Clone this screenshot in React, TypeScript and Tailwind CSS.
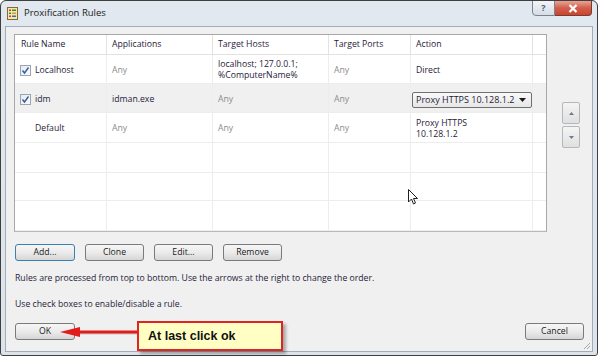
import React from "react";

const font = { fontFamily: '"Open Sans", "Noto Sans", sans-serif' };

function Check() {
  return (
    <div className="w-[11px] h-[11px] border border-[#9aa4b4] bg-gradient-to-br from-[#e4eaf2] to-[#fafbfd] flex items-center justify-center shrink-0">
      <svg width="9" height="9" viewBox="0 0 9 9">
        <path d="M1.5 4.5 L3.5 7 L7.5 1.5" stroke="#3a5a98" strokeWidth="1.4" fill="none" />
      </svg>
    </div>
  );
}

function Btn({ label, w, focus }: { label: string; w: string; focus?: boolean }) {
  return (
    <div
      className={`${w} h-[17px] rounded-[3px] border ${focus ? "border-[#3c7fb1]" : "border-[#7a7a7a]"} bg-gradient-to-b from-[#f6f6f6] via-[#ebebeb] to-[#d6d6d6] flex items-center justify-center text-[8.7px] text-[#1a1a1a]`}
    >
      {label}
    </div>
  );
}

const cols = ["w-[92px]", "w-[106px]", "w-[116px]", "w-[82px]", "w-[122px]", "w-[15px]"];

function Row({ h, bg, cells }: { h: string; bg?: string; cells: React.ReactNode[] }) {
  return (
    <div className={`flex ${h} ${bg ?? "bg-white"} border-b border-[#ededed]`}>
      {cols.map((c, i) => (
        <div key={i} className={`${c} shrink-0 border-r border-[#ededed] flex items-center px-[5px] pt-[3px] text-[8.7px] leading-[11.5px] overflow-visible`}>
          {cells[i]}
        </div>
      ))}
    </div>
  );
}

const gray = (t: string) => <span className="text-[#8c8c8c]">{t}</span>;
const dark = (t: React.ReactNode) => <span className="text-[#1f2238]">{t}</span>;

export default function App() {
  return (
    <div className="w-[600px] h-[357px] bg-white relative" style={font}>
      <div className="w-[598px] h-[356px] border border-[#3f3f3f] rounded-t-[6px] rounded-b-[3px] bg-gradient-to-b from-[#e2e8ef] to-[#dde3ea] flex flex-col relative overflow-hidden">
        {/* title bar */}
        <div className="h-[25px] flex items-center pl-[6px] gap-[6px] shrink-0">
          <svg width="11" height="13" viewBox="0 0 11 13">
            <rect x="0.5" y="0.5" width="10" height="12" fill="#f3e7b0" stroke="#8a6a2a" />
            <rect x="2" y="2.5" width="2" height="1.5" fill="#d83a2a" />
            <rect x="5" y="2.5" width="4" height="1.5" fill="#3a8a3a" />
            <rect x="2" y="5.5" width="2" height="1.5" fill="#3a8a3a" />
            <rect x="5" y="5.5" width="4" height="1.5" fill="#d8a02a" />
            <rect x="2" y="8.5" width="2" height="1.5" fill="#d83a2a" />
            <rect x="5" y="8.5" width="4" height="1.5" fill="#3a6ab8" />
          </svg>
          <span className="text-[9.5px] text-[#1a1a1a]">Proxification Rules</span>
        </div>
        {/* window controls */}
        <div className="absolute top-[-1px] right-[5px] flex">
          <div className="w-[23px] h-[16px] border border-[#7a8491] rounded-bl-[4px] bg-gradient-to-b from-[#f2f5f8] to-[#d6dde5] flex items-center justify-center text-[9px] text-[#55606c] font-bold">
            ?
          </div>
          <div className="w-[37px] h-[16px] border border-l-0 border-[#7a3a30] rounded-br-[4px] bg-gradient-to-b from-[#e8a393] via-[#d35d4c] to-[#c8452f] flex items-center justify-center">
            <svg width="10" height="9" viewBox="0 0 10 9">
              <path d="M1.5 1 L8.5 8 M8.5 1 L1.5 8" stroke="#ffffff" strokeWidth="2.2" />
            </svg>
          </div>
        </div>
        {/* client */}
        <div className="flex-1 mx-[4px] mb-[3px] border border-[#a3adb8] bg-[#f0f0f0] flex flex-col relative">
          <div className="flex pt-[7px] pl-[8px]">
            {/* list view */}
            <div className="w-[533px] h-[198px] border border-[#a8a8ac] border-b-[#b8b8c0] bg-white flex flex-col overflow-hidden">
              <div className="flex h-[20px] border-b border-[#e2e2e2] bg-white shrink-0">
                {["Rule Name", "Applications", "Target Hosts", "Target Ports", "Action", ""].map((t, i) => (
                  <div key={i} className={`${cols[i]} shrink-0 border-r border-[#e2e2e2] flex items-center ${i === 0 ? "pl-[6px]" : "px-[5px]"} text-[8.7px] text-[#1f2238]`}>
                    {t}
                  </div>
                ))}
              </div>
              <Row
                h="h-[29px]"
                cells={[
                  <div className="flex items-center gap-[4px]"><Check />{dark("Localhost")}</div>,
                  gray("Any"),
                  <div className="flex flex-col text-[#1f2238] whitespace-nowrap"><span>localhost; 127.0.0.1;</span><span>%ComputerName%</span></div>,
                  gray("Any"),
                  dark("Direct"),
                  null,
                ]}
              />
              <Row
                h="h-[30px]"
                bg="bg-[#f0f0f0]"
                cells={[
                  <div className="flex items-center gap-[4px]"><Check />{dark("idm")}</div>,
                  dark("idman.exe"),
                  gray("Any"),
                  gray("Any"),
                  <div className="w-[120px] shrink-0 -ml-[4px] h-[16px] border border-[#707070] rounded-[2px] bg-gradient-to-b from-[#fafafa] to-[#e6e6e6] flex items-center justify-between pl-[3px] pr-[5px] text-[9px] text-[#1f2238] whitespace-nowrap">
                    <span>Proxy HTTPS 10.128.1.2</span>
                    <svg width="7" height="4" viewBox="0 0 7 4"><path d="M0 0 L7 0 L3.5 4 Z" fill="#1a1a1a" /></svg>
                  </div>,
                  null,
                ]}
              />
              <Row
                h="h-[30px]"
                cells={[
                  <div className="pl-[15px]">{dark("Default")}</div>,
                  gray("Any"),
                  gray("Any"),
                  gray("Any"),
                  <div className="flex flex-col text-[#1f2238] whitespace-nowrap"><span>Proxy HTTPS</span><span>10.128.1.2</span></div>,
                  null,
                ]}
              />
              <Row h="h-[30px]" cells={[]} />
              <Row h="h-[29px]" cells={[]} />
              <Row h="h-[30px]" cells={[]} />
            </div>
            {/* up/down */}
            <div className="ml-[15px] mt-[68px] flex flex-col gap-[2px]">
              <div className="w-[18px] h-[22px] border border-[#b4b8bd] rounded-[2px] bg-gradient-to-b from-[#f4f4f4] to-[#e0e0e0] flex items-center justify-center">
                <svg width="5" height="3" viewBox="0 0 5 3"><path d="M0 3 L5 3 L2.5 0 Z" fill="#6c7a96" /></svg>
              </div>
              <div className="w-[18px] h-[22px] border border-[#b4b8bd] rounded-[2px] bg-gradient-to-b from-[#f4f4f4] to-[#e0e0e0] flex items-center justify-center">
                <svg width="5" height="3" viewBox="0 0 5 3"><path d="M0 0 L5 0 L2.5 3 Z" fill="#6c7a96" /></svg>
              </div>
            </div>
          </div>
          {/* buttons */}
          <div className="flex pl-[9px] mt-[12px] gap-[10px]">
            <Btn label="Add..." w="w-[60px]" focus />
            <Btn label="Clone" w="w-[59px]" />
            <Btn label="Edit..." w="w-[59px]" />
            <Btn label="Remove" w="w-[59px]" />
          </div>
          <div className="pl-[9px] mt-[11px] text-[8.7px] leading-[12px] text-[#1f2238]">
            Rules are processed from top to bottom. Use the arrows at the right to change the order.
          </div>
          <div className="pl-[9px] mt-[14px] text-[8.7px] leading-[12px] text-[#1f2238]">
            Use check boxes to enable/disable a rule.
          </div>
          <div className="flex justify-between pl-[9px] pr-[8px] mt-[13px]">
            <Btn label="OK" w="w-[60px]" />
            <Btn label="Cancel" w="w-[59px]" />
          </div>
          {/* resize grip */}
          <svg className="absolute right-[1px] bottom-[1px]" width="9" height="9" viewBox="0 0 9 9">
            <path d="M8 2 L2 8 M8 5 L5 8 M8 8 L8 8" stroke="#a8a8a8" strokeWidth="1" />
          </svg>
        </div>
      </div>
      {/* mouse cursor */}
      <svg className="absolute left-[408px] top-[189px]" width="11" height="17" viewBox="0 0 11 17">
        <path d="M0.5 0.5 L0.5 13 L3.5 10 L5.5 15 L7.5 14 L5.5 9.5 L9.5 9.5 Z" fill="#ffffff" stroke="#222" strokeWidth="1" />
      </svg>
      {/* arrow */}
      <svg className="absolute left-[58px] top-[324px]" width="82" height="16" viewBox="0 0 82 16">
        <path d="M20 9 L82 9" stroke="#b0a0a0" strokeWidth="3" opacity="0.5" />
        <path d="M20 8 L82 8" stroke="#e21b1b" strokeWidth="3" />
        <path d="M2 8 L22 3 L22 13 Z" fill="#e21b1b" />
      </svg>
      {/* callout */}
      <div className="absolute left-[137px] top-[321px] w-[146px] h-[30px] border-2 border-[#e02424] bg-[#ffffc4] shadow-[3px_3px_3px_rgba(0,0,0,0.3)] flex items-center pl-[9px]">
        <span className="text-[12.5px] font-bold text-[#111]" style={{ fontFamily: '"Liberation Sans", Arial, sans-serif' }}>
          At last click ok
        </span>
      </div>
    </div>
  );
}
